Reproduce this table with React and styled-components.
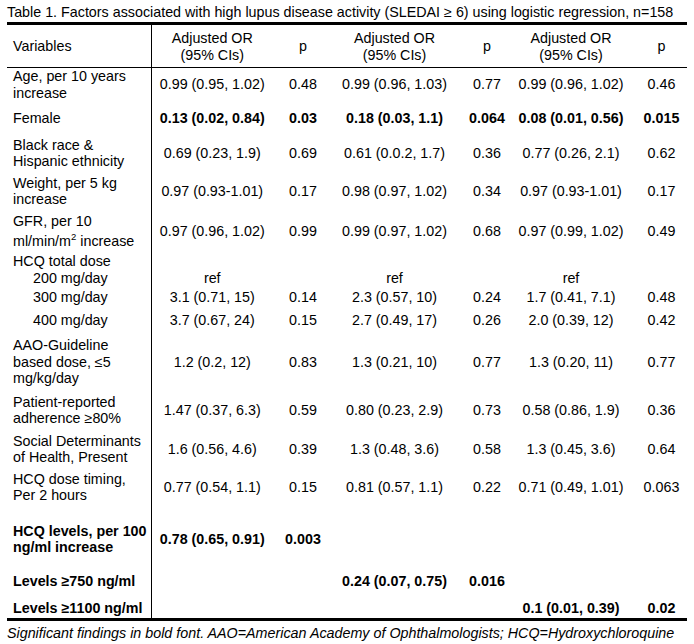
import React from "react";
import styled, { createGlobalStyle } from "styled-components";

const Global = createGlobalStyle`
  html, body { margin: 0; padding: 0; background: #fff; }
  body { font-family: "Liberation Sans", Arial, sans-serif; color: #000; }
`;

const Page = styled.div`
  width: 694px;
  padding: 0 7px;
  box-sizing: border-box;
  font-size: 14.3px;
  line-height: 16.5px;
`;

const Title = styled.div`
  padding: 4px 0 1.5px;
  white-space: nowrap;
`;

const Table = styled.table`
  width: 680px;
  table-layout: fixed;
  border-collapse: collapse;
  border-top: 3px solid #000;
  border-bottom: 3px solid #000;
`;

const Col = styled.col`
  width: ${(p) => p.$w}px;
`;

const HeadRow = styled.tr`
  height: 44px;
  border-bottom: 1px solid #000;
`;

const HeadCell = styled.th`
  font-weight: normal;
  text-align: ${(p) => (p.$left ? "left" : "center")};
  vertical-align: middle;
  padding: 1px 0 0 ${(p) => p.$shift || 0}px;
  white-space: nowrap;
  ${(p) => (p.$divider ? "border-right: 1px solid #000;" : "")}
`;

const Cell = styled.td`
  text-align: center;
  vertical-align: middle;
  white-space: nowrap;
  padding: ${(p) => p.$pt}px 0 ${(p) => p.$pb || 0}px ${(p) => p.$shift || 0}px;
  font-weight: ${(p) => (p.$bold ? "bold" : "normal")};
`;

const VarCell = styled.td`
  text-align: left;
  vertical-align: middle;
  white-space: nowrap;
  border-right: 1px solid #000;
  padding: ${(p) => p.$pt}px 0 ${(p) => p.$pb || 0}px ${(p) => (p.$indent ? 26 : 6)}px;
  font-weight: ${(p) => (p.$bold ? "bold" : "normal")};
`;

const Sup = styled.sup`
  font-size: 9.5px;
`;

const Footnote = styled.div`
  font-style: italic;
  padding-top: 4px;
  white-space: nowrap;
`;

const shifts = [0, 0, 0, 4, 0, 8];

const rows = [
  { pt: 0, label: ["Age, per 10 years", "increase"], v: ["0.99 (0.95, 1.02)", "0.48", "0.99 (0.96, 1.03)", "0.77", "0.99 (0.96, 1.02)", "0.46"] },
  { pt: 9, label: ["Female"], v: ["0.13 (0.02, 0.84)", "0.03", "0.18 (0.03, 1.1)", "0.064", "0.08 (0.01, 0.56)", "0.015"], bold: [0, 1, 2, 3, 4, 5] },
  { pt: 10, label: ["Black race &", "Hispanic ethnicity"], v: ["0.69 (0.23, 1.9)", "0.69", "0.61 (0.0.2, 1.7)", "0.36", "0.77 (0.26, 2.1)", "0.62"] },
  { pt: 5, label: ["Weight, per 5 kg", "increase"], v: ["0.97 (0.93-1.01)", "0.17", "0.98 (0.97, 1.02)", "0.34", "0.97 (0.93-1.01)", "0.17"] },
  { pt: 5, gfr: true, v: ["0.97 (0.96, 1.02)", "0.99", "0.99 (0.97, 1.02)", "0.68", "0.97 (0.99, 1.02)", "0.49"] },
  { pt: 4, label: ["HCQ total dose"], v: ["", "", "", "", "", ""] },
  { pt: 0, indent: true, label: ["200 mg/day"], v: ["ref", "", "ref", "", "ref", ""] },
  { pt: 3, indent: true, label: ["300 mg/day"], v: ["3.1 (0.71, 15)", "0.14", "2.3 (0.57, 10)", "0.24", "1.7 (0.41, 7.1)", "0.48"] },
  { pt: 6, indent: true, label: ["400 mg/day"], v: ["3.7 (0.67, 24)", "0.15", "2.7 (0.49, 17)", "0.26", "2.0 (0.39, 12)", "0.42"] },
  { pt: 9, label: ["AAO-Guideline", "based dose, \u22645", "mg/kg/day"], v: ["1.2 (0.2, 12)", "0.83", "1.3 (0.21, 10)", "0.77", "1.3 (0.20, 11)", "0.77"] },
  { pt: 7, label: ["Patient-reported", "adherence \u226580%"], v: ["1.47 (0.37, 6.3)", "0.59", "0.80 (0.23, 2.9)", "0.73", "0.58 (0.86, 1.9)", "0.36"] },
  { pt: 6, label: ["Social Determinants", "of Health, Present"], v: ["1.6 (0.56, 4.6)", "0.39", "1.3 (0.48, 3.6)", "0.58", "1.3 (0.45, 3.6)", "0.64"] },
  { pt: 5, label: ["HCQ dose timing,", "Per 2 hours"], v: ["0.77 (0.54, 1.1)", "0.15", "0.81 (0.57, 1.1)", "0.22", "0.71 (0.49, 1.01)", "0.063"] },
  { pt: 19, boldLabel: true, label: ["HCQ levels, per 100", "ng/ml increase"], v: ["0.78 (0.65, 0.91)", "0.003", "", "", "", ""], bold: [0, 1] },
  { pt: 17, boldLabel: true, label: ["Levels \u2265750 ng/ml"], v: ["", "", "0.24 (0.07, 0.75)", "0.016", "", ""], bold: [2, 3] },
  { pt: 11, pb: 1, boldLabel: true, label: ["Levels \u22651100 ng/ml"], v: ["", "", "", "", "0.1 (0.01, 0.39)", "0.02"], bold: [4, 5] },
];

function Label({ row }) {
  if (row.gfr) {
    return (
      <>
        GFR, per 10
        <br />
        ml/min/m<Sup>2</Sup> increase
      </>
    );
  }
  return row.label.map((l, i) => (
    <React.Fragment key={i}>
      {i > 0 && <br />}
      {l}
    </React.Fragment>
  ));
}

export default function App() {
  return (
    <Page>
      <Global />
      <Title>
        Table 1. Factors associated with high lupus disease activity (SLEDAI &ge; 6) using logistic regression, n=158
      </Title>
      <Table>
        <colgroup>
          <Col $w={144} />
          <Col $w={122} />
          <Col $w={60} />
          <Col $w={123} />
          <Col $w={58} />
          <Col $w={114} />
          <Col $w={59} />
        </colgroup>
        <thead>
          <HeadRow>
            <HeadCell $left $divider $shift={6}>Variables</HeadCell>
            <HeadCell>Adjusted OR<br />(95% CIs)</HeadCell>
            <HeadCell>p</HeadCell>
            <HeadCell>Adjusted OR<br />(95% CIs)</HeadCell>
            <HeadCell $shift={4}>p</HeadCell>
            <HeadCell>Adjusted OR<br />(95% CIs)</HeadCell>
            <HeadCell $shift={8}>p</HeadCell>
          </HeadRow>
        </thead>
        <tbody>
          {rows.map((r, i) => (
            <tr key={i}>
              <VarCell $pt={r.pt} $pb={r.pb} $indent={r.indent} $bold={r.boldLabel}>
                <Label row={r} />
              </VarCell>
              {r.v.map((val, j) => (
                <Cell key={j} $pt={r.pt} $pb={r.pb} $shift={shifts[j]} $bold={r.bold && r.bold.includes(j)}>
                  {val}
                </Cell>
              ))}
            </tr>
          ))}
        </tbody>
      </Table>
      <Footnote>
        Significant findings in bold font. AAO=American Academy of Ophthalmologists; HCQ=Hydroxychloroquine
      </Footnote>
    </Page>
  );
}
